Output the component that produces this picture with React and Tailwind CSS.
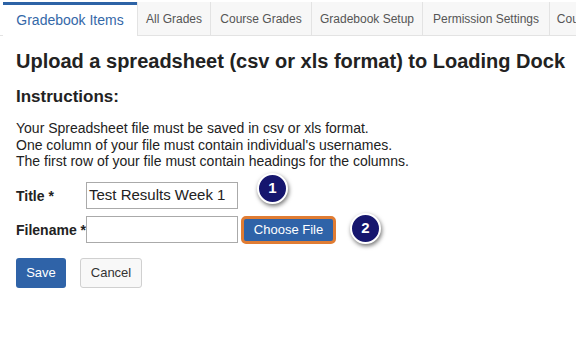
import React from 'react';

const tabs = [
  { label: 'All Grades', w: 'w-[73px]' },
  { label: 'Course Grades', w: 'w-[101px]' },
  { label: 'Gradebook Setup', w: 'w-[111px]' },
  { label: 'Permission Settings', w: 'w-[127px]' },
  { label: 'Course Settings', w: 'w-[100px]' },
];

function Badge({ n, className }) {
  return (
    <span
      className={`absolute flex h-[31px] w-[31px] items-center justify-center rounded-full border-2 border-white bg-[#16166e] text-[15px] font-bold text-white shadow-[1px_2px_4px_rgba(0,0,0,0.55)] ${className}`}
    >
      {n}
    </span>
  );
}

function App() {
  return (
    <div className="relative h-[348px] w-[576px] overflow-hidden bg-white font-['Liberation_Sans',Arial,sans-serif] text-[#222]">
      {/* Tabs */}
      <div className="flex h-[36px] border-b border-[#e3e3e3] pl-[3px] pt-[2px]">
        <div className="flex h-[34px] w-[134px] shrink-0 items-center justify-center border-t-[3px] border-[#2d63a6] bg-white text-[14px] text-[#3468a8]">
          Gradebook Items
        </div>
        {tabs.map((t) => (
          <div
            key={t.label}
            className={`flex h-[33px] shrink-0 items-center justify-center whitespace-nowrap border-l border-[#e3e3e3] bg-[#f7f7f7] text-[12px] text-[#555] ${t.w}`}
          >
            {t.label}
          </div>
        ))}
      </div>

      <div className="px-4">
        <h1 className="mt-[13px] whitespace-nowrap text-[20px] font-bold leading-[24px] text-[#222]">
          Upload a spreadsheet (csv or xls format) to Loading Dock
        </h1>
        <h2 className="mt-[13px] text-[17px] font-bold leading-[22px]">Instructions:</h2>
        <div className="mt-[12px] text-[14px] leading-[16.5px]">
          <p>Your Spreadsheet file must be saved in csv or xls format.</p>
          <p>One column of your file must contain individual's usernames.</p>
          <p>The first row of your file must contain headings for the columns.</p>
        </div>

        <div className="relative mt-[12px]">
          <div className="flex items-start">
            <label className="w-[70px] whitespace-nowrap pt-[4px] text-[14px] font-bold">Title *</label>
            <div className="flex h-[27px] w-[152px] items-center border border-[#aaa] px-[2px] text-[15px]">
              Test Results Week 1
            </div>
          </div>
          <div className="mt-[7px] flex items-start">
            <label className="w-[70px] whitespace-nowrap pt-[4px] text-[14px] font-bold">Filename *</label>
            <div className="h-[27px] w-[152px] border border-[#aaa]"></div>
            <button className="ml-[3px] flex h-[28px] w-[95px] items-center justify-center rounded-[5px] border-[3px] border-[#e07c33] bg-[#2f63a8] text-[13px] text-white">
              Choose File
            </button>
          </div>
          <Badge n="1" className="left-[241px] top-[-9px]" />
          <Badge n="2" className="left-[334px] top-[31px]" />
        </div>

        <div className="mt-[14px] flex gap-[14px]">
          <button className="h-[30px] w-[50px] rounded-[3px] bg-[#2f63a8] text-[13px] text-white">Save</button>
          <button className="h-[30px] w-[62px] rounded-[3px] border border-[#d0d0d0] bg-[#f8f8f8] text-[13px] text-[#333]">
            Cancel
          </button>
        </div>
      </div>
    </div>
  );
}

export default App;
